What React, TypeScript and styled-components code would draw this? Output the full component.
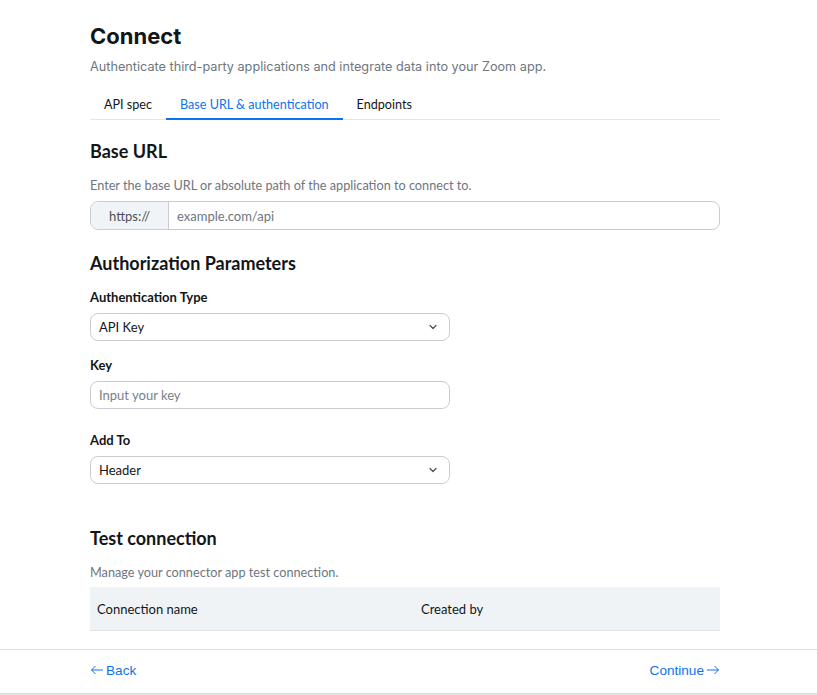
import React from "react";
import styled, { createGlobalStyle } from "styled-components";

const Global = createGlobalStyle`
  html, body { margin: 0; padding: 0; background: #fff; }
  body { font-family: Inter, "Noto Sans", sans-serif; color: #131619; }
  * { box-sizing: border-box; }
`;

const SEG = `Lato, "Open Sans", sans-serif`;

const Page = styled.div`
  width: 817px;
  min-height: 695px;
  display: flex;
  flex-direction: column;
`;

const Main = styled.main`
  width: 630px;
  margin-left: 90px;
  padding-top: 21px;
`;

const Title = styled.h1`
  margin: 0;
  font-size: 22px;
  font-weight: 700;
  line-height: 30px;
  color: #131619;
`;

const Subtitle = styled.p`
  margin: 7px 0 0;
  font-size: 12.7px;
  line-height: 18px;
  color: #6e7680;
`;

const Tabs = styled.nav`
  display: flex;
  margin-top: 19px;
  border-bottom: 1px solid #e4e6ea;
  font-family: ${SEG};
`;

const Tab = styled.div<{ $active?: boolean }>`
  padding: 1px 14px 4px;
  font-size: 12.6px;
  line-height: 18px;
  color: ${(p) => (p.$active ? "#0e72ed" : "#131619")};
  border-bottom: 2px solid ${(p) => (p.$active ? "#0e72ed" : "transparent")};
  margin-bottom: -1px;
`;

const Section = styled.section<{ $top: number }>`
  margin-top: ${(p) => p.$top}px;
  font-family: ${SEG};
`;

const H2 = styled.h2`
  margin: 0;
  font-size: 18px;
  font-weight: 700;
  line-height: 24px;
  color: #131619;
`;

const Desc = styled.p`
  margin: 13px 0 0;
  font-size: 12.7px;
  line-height: 18px;
  color: #6e7680;
`;

const InputGroup = styled.div`
  margin-top: 7px;
  display: flex;
  height: 29px;
  border: 1px solid #c9ccd3;
  border-radius: 8px;
  overflow: hidden;
`;

const Prefix = styled.div`
  width: 78px;
  display: flex;
  align-items: center;
  justify-content: center;
  background: #f1f4f6;
  border-right: 1px solid #c9ccd3;
  font-size: 13px;
  color: #4a4f55;
`;

const GroupInput = styled.div`
  flex: 1;
  display: flex;
  align-items: center;
  padding-left: 8px;
  font-size: 13px;
  color: #6e7680;
`;

const Field = styled.div<{ $top: number }>`
  margin-top: ${(p) => p.$top}px;
  width: 360px;
`;

const Label = styled.div`
  font-size: 13px;
  font-weight: 700;
  line-height: 18px;
  color: #131619;
  margin-bottom: 7px;
`;

const Box = styled.div<{ $placeholder?: boolean }>`
  height: 28px;
  border: 1px solid #c9ccd3;
  border-radius: 8px;
  display: flex;
  align-items: center;
  justify-content: space-between;
  padding: 0 11px 0 8px;
  font-size: 13px;
  color: ${(p) => (p.$placeholder ? "#7a8089" : "#131619")};
`;

const Table = styled.div`
  margin-top: 6px;
  display: grid;
  grid-template-columns: 324px 1fr;
  height: 44px;
  align-items: center;
  background: #f0f3f6;
  border-bottom: 1px solid #dfe2e6;
  padding-left: 7px;
  font-size: 13px;
  color: #131619;
`;

const Footer = styled.footer`
  margin-top: 18px;
  height: 46px;
  border-top: 1px solid #e0e0e0;
  border-bottom: 2px solid #e0e0e0;
  display: flex;
`;

const FooterInner = styled.div`
  width: 630px;
  margin-left: 90px;
  padding-bottom: 3px;
  display: flex;
  align-items: center;
  justify-content: space-between;
  font-family: "Liberation Sans", Arial, sans-serif;
  font-size: 13.6px;
  color: #0e72ed;
`;

const NavLink = styled.span`
  display: inline-flex;
  align-items: center;
  gap: 2px;
`;

const Chevron = () => (
  <svg width="10" height="10" viewBox="0 0 10 10" fill="none">
    <path d="M2 3.5 L5 6.5 L8 3.5" stroke="#4a4f55" strokeWidth="1.2" strokeLinecap="round" strokeLinejoin="round" />
  </svg>
);

const Arrow = ({ left }: { left?: boolean }) => (
  <svg width="14" height="10" viewBox="0 0 14 10" fill="none">
    {left ? (
      <path d="M13 5 H1.5 M5.5 1 L1.5 5 L5.5 9" stroke="#0e72ed" strokeWidth="1" />
    ) : (
      <path d="M1 5 H12.5 M8.5 1 L12.5 5 L8.5 9" stroke="#0e72ed" strokeWidth="1" />
    )}
  </svg>
);

export default function App() {
  return (
    <Page>
      <Global />
      <Main>
        <Title>Connect</Title>
        <Subtitle>Authenticate third-party applications and integrate data into your Zoom app.</Subtitle>
        <Tabs>
          <Tab>API spec</Tab>
          <Tab $active>Base URL &amp; authentication</Tab>
          <Tab>Endpoints</Tab>
        </Tabs>

        <Section $top={19}>
          <H2>Base URL</H2>
          <Desc>Enter the base URL or absolute path of the application to connect to.</Desc>
          <InputGroup>
            <Prefix>https://</Prefix>
            <GroupInput>example.com/api</GroupInput>
          </InputGroup>
        </Section>

        <Section $top={21}>
          <H2>Authorization Parameters</H2>
          <Field $top={13}>
            <Label>Authentication Type</Label>
            <Box>
              API Key
              <Chevron />
            </Box>
          </Field>
          <Field $top={15}>
            <Label>Key</Label>
            <Box $placeholder>Input your key</Box>
          </Field>
          <Field $top={22}>
            <Label>Add To</Label>
            <Box>
              Header
              <Chevron />
            </Box>
          </Field>
        </Section>

        <Section $top={42}>
          <H2>Test connection</H2>
          <Desc>Manage your connector app test connection.</Desc>
          <Table>
            <span>Connection name</span>
            <span>Created by</span>
          </Table>
        </Section>
      </Main>
      <Footer>
        <FooterInner>
          <NavLink>
            <Arrow left />
            Back
          </NavLink>
          <NavLink>
            Continue
            <Arrow />
          </NavLink>
        </FooterInner>
      </Footer>
    </Page>
  );
}
